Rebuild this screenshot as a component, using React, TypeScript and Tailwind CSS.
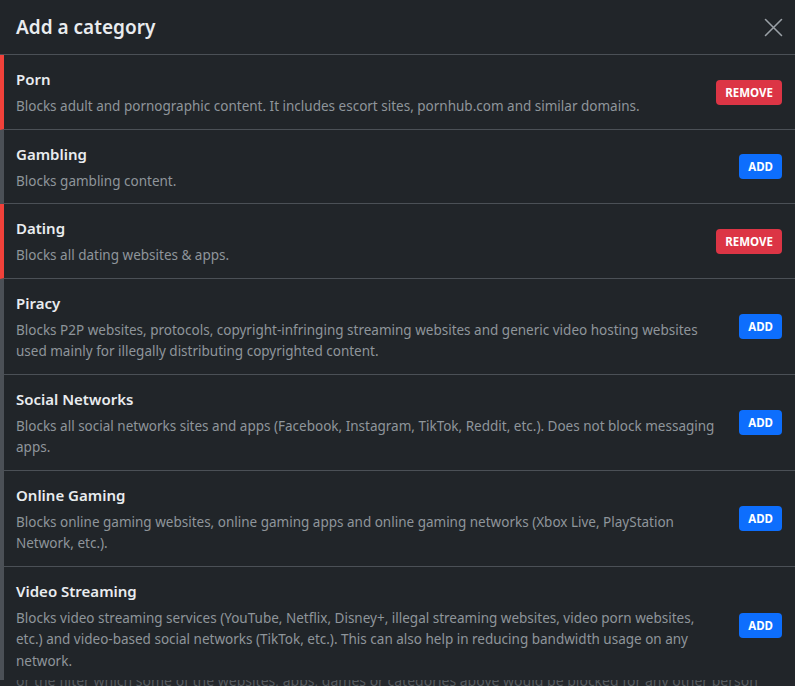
type Category = {
  name: string;
  description: string;
  active: boolean;
};

const categories: Category[] = [
  {
    name: "Porn",
    description:
      "Blocks adult and pornographic content. It includes escort sites, pornhub.com and similar domains.",
    active: true,
  },
  { name: "Gambling", description: "Blocks gambling content.", active: false },
  { name: "Dating", description: "Blocks all dating websites & apps.", active: true },
  {
    name: "Piracy",
    description:
      "Blocks P2P websites, protocols, copyright-infringing streaming websites and generic video hosting websites used mainly for illegally distributing copyrighted content.",
    active: false,
  },
  {
    name: "Social Networks",
    description:
      "Blocks all social networks sites and apps (Facebook, Instagram, TikTok, Reddit, etc.). Does not block messaging apps.",
    active: false,
  },
  {
    name: "Online Gaming",
    description:
      "Blocks online gaming websites, online gaming apps and online gaming networks (Xbox Live, PlayStation Network, etc.).",
    active: false,
  },
  {
    name: "Video Streaming",
    description:
      "Blocks video streaming services (YouTube, Netflix, Disney+, illegal streaming websites, video porn websites, etc.) and video-based social networks (TikTok, etc.). This can also help in reducing bandwidth usage on any network.",
    active: false,
  },
];

function CategoryRow({ category }: { category: Category }) {
  return (
    <div
      className={`flex items-center border-b border-l-4 border-b-[#4b5056] pl-3 pr-[13px] ${
        category.active ? "border-l-[#f0413a]" : "border-l-[#4b5056]"
      }`}
    >
      <div className="w-[708px] min-w-0 shrink pt-3 pb-[11px]">
        <div className="text-[15px] font-semibold leading-6 text-[#e9ecef]">
          {category.name}
        </div>
        <p className="mt-[5px] text-[13.5px] leading-[21.5px] text-[#8f959b]">
          {category.description}
        </p>
      </div>

      <div className="ml-auto shrink-0 pl-2">
        {category.active ? (
          <button
            type="button"
            className="h-[25px] rounded-[4px] bg-[#dc3545] px-[9px] text-[11.5px] font-bold uppercase text-white"
          >
            Remove
          </button>
        ) : (
          <button
            type="button"
            className="h-[25px] rounded-[4px] bg-[#0d6efd] px-[9px] text-[11.5px] font-bold uppercase text-white"
          >
            Add
          </button>
        )}
      </div>
    </div>
  );
}

export default function App() {
  return (
    <div
      className="h-[686px] w-[795px] overflow-hidden bg-[#212529]"
      style={{ fontFamily: '"Segoe UI", "Noto Sans", "Open Sans", sans-serif' }}
    >
      <div className="flex h-[680px] flex-col overflow-hidden">
        <div className="flex items-center justify-between border-b border-[#4b5056] py-3 pl-4 pr-[12px]">
          <h2 className="text-[19px] font-semibold leading-[30px] text-[#e9ecef]">
            Add a category
          </h2>
          <button type="button" className="text-[#9aa0a6]">
            <svg width="19" height="19" viewBox="0 0 19 19" fill="none">
              <path
                d="M1.5 1.5 L17.5 17.5 M17.5 1.5 L1.5 17.5"
                stroke="currentColor"
                strokeWidth="1.6"
                strokeLinecap="round"
              />
            </svg>
          </button>
        </div>

        {categories.map((category) => (
          <CategoryRow key={category.name} category={category} />
        ))}
      </div>

      <div className="h-[6px] overflow-hidden bg-[#25282c] pl-4">
        <p className="-mt-[9px] whitespace-nowrap text-[14px] leading-[20px] text-[#555a5f]">
          or the filter which some of the websites, apps, games or categories above would be blocked for any other person
        </p>
      </div>
    </div>
  );
}
